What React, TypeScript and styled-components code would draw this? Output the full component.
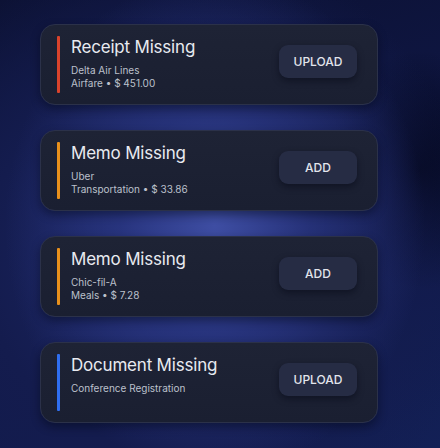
import styled, { createGlobalStyle } from "styled-components";

const GlobalStyle = createGlobalStyle`
  html, body {
    margin: 0;
    padding: 0;
    background: #0a0f2a;
  }
  * { box-sizing: border-box; }
`;

const Page = styled.div`
  width: 440px;
  height: 448px;
  overflow: hidden;
  font-family: Inter, "Noto Sans", sans-serif;
  background:
    radial-gradient(ellipse 210px 250px at 215px 225px, rgba(66, 82, 170, 0.9) 0%, rgba(48, 62, 145, 0.6) 45%, rgba(30, 40, 110, 0) 100%),
    radial-gradient(ellipse 320px 330px at 160px 260px, #1d2868 0%, #141c4e 55%, rgba(10, 15, 42, 0) 100%),
    radial-gradient(ellipse 90px 120px at 420px 170px, #03061a 0%, rgba(3, 6, 26, 0) 100%),
    linear-gradient(160deg, #0b1030 0%, #101848 55%, #132056 100%);
  display: flex;
  flex-direction: column;
  gap: 25px;
  padding: 24px 0 0 40px;
`;

const Card = styled.div`
  width: 338px;
  height: 81px;
  border-radius: 15px;
  background: linear-gradient(180deg, #1e2335 0%, #1a1f31 100%);
  border: 1px solid #2b3149;
  box-shadow: 0 4px 10px rgba(3, 6, 20, 0.45);
  display: flex;
  align-items: flex-start;
  padding: 0 20px 0 16px;
`;

const Accent = styled.div<{ $color: string }>`
  width: 3px;
  align-self: stretch;
  margin: 11px 0;
  background: ${({ $color }) => $color};
  border-radius: 1px;
`;

const Body = styled.div`
  flex: 1;
  display: flex;
  flex-direction: column;
  align-self: stretch;
  padding: 12px 0 0 11px;
`;

const Title = styled.div`
  font-size: 17px;
  font-weight: 400;
  color: #e8eaf0;
  letter-spacing: -0.2px;
  line-height: 20px;
`;

const Lines = styled.div`
  margin-top: 7px;
  display: flex;
  flex-direction: column;
  font-size: 10px;
  line-height: 12.5px;
  color: #bcc0cc;
`;

const Button = styled.button`
  margin-top: 20px;
  width: 78px;
  height: 33px;
  border: none;
  border-radius: 9px;
  background: #262c44;
  box-shadow: 0 3px 6px rgba(5, 8, 22, 0.5);
  color: #e2e5ec;
  font-family: inherit;
  font-size: 12px;
  font-weight: 500;
  cursor: pointer;
`;

type Item = {
  title: string;
  color: string;
  lines: string[];
  action: string;
};

const items: Item[] = [
  { title: "Receipt Missing", color: "#d9432c", lines: ["Delta Air Lines", "Airfare • $ 451.00"], action: "UPLOAD" },
  { title: "Memo Missing", color: "#e8901c", lines: ["Uber", "Transportation • $ 33.86"], action: "ADD" },
  { title: "Memo Missing", color: "#e8901c", lines: ["Chic-fil-A", "Meals • $ 7.28"], action: "ADD" },
  { title: "Document Missing", color: "#2f6ef0", lines: ["Conference Registration"], action: "UPLOAD" },
];

export default function App() {
  return (
    <>
      <GlobalStyle />
      <Page>
        {items.map((item, i) => (
          <Card key={i}>
            <Accent $color={item.color} />
            <Body>
              <Title>{item.title}</Title>
              <Lines>
                {item.lines.map((l) => (
                  <span key={l}>{l}</span>
                ))}
              </Lines>
            </Body>
            <Button>{item.action}</Button>
          </Card>
        ))}
      </Page>
    </>
  );
}
